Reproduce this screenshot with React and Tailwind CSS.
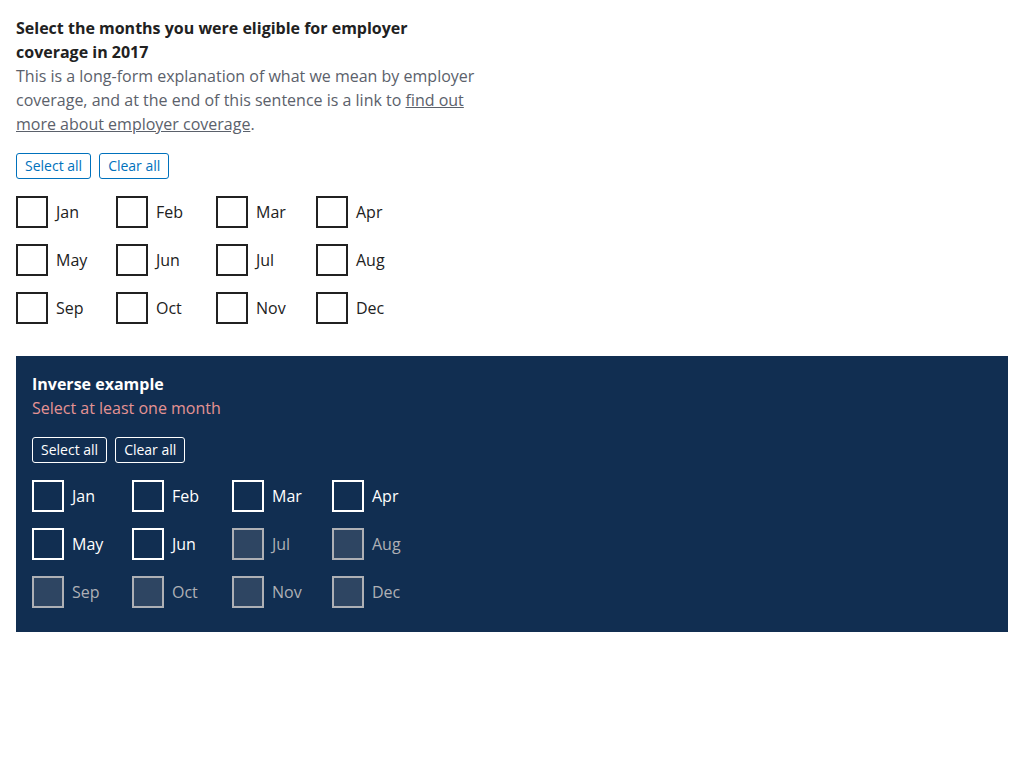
import { useState } from "react";

const MONTHS = ["Jan", "Feb", "Mar", "Apr", "May", "Jun", "Jul", "Aug", "Sep", "Oct", "Nov", "Dec"];

// months that are disabled in the inverse example
const DISABLED = ["Jul", "Aug", "Sep", "Oct", "Nov", "Dec"];

function MonthGrid({ inverse, checked, onToggle, disabled = [] }) {
  return (
    <div className="mt-[17px] grid grid-cols-[repeat(4,100px)] gap-y-4">
      {MONTHS.map((m) => {
        const off = disabled.includes(m);
        let box = "border-[#212121] bg-white";
        let text = "text-[#212121]";
        if (inverse) {
          box = off ? "border-[#aeb0b5] bg-[#2e4562]" : "border-white bg-[#112e51]";
          text = off ? "text-[#aeb0b5]" : "text-white";
        }
        return (
          <label key={m} className="flex h-8 items-center gap-2 cursor-pointer">
            <span
              className={`flex h-8 w-8 items-center justify-center border-2 ${box}`}
              onClick={() => !off && onToggle(m)}
            >
              {checked.includes(m) && (
                <svg viewBox="0 0 16 16" className={`h-5 w-5 ${inverse ? "text-white" : "text-[#212121]"}`}>
                  <path d="M2 8.5l4 4 8-9" fill="none" stroke="currentColor" strokeWidth="2" />
                </svg>
              )}
            </span>
            <span className={`text-base ${text}`}>{m}</span>
          </label>
        );
      })}
    </div>
  );
}

function Buttons({ inverse, onSelect, onClear }) {
  const cls = inverse
    ? "border-white text-white"
    : "border-[#0071bc] text-[#0071bc]";
  return (
    <div className="mt-[17px] flex gap-2">
      <button onClick={onSelect} className={`rounded-[3px] border px-2 py-[2px] text-sm leading-5 ${cls}`}>
        Select all
      </button>
      <button onClick={onClear} className={`rounded-[3px] border px-2 py-[2px] text-sm leading-5 ${cls}`}>
        Clear all
      </button>
    </div>
  );
}

export default function App() {
  const [picked, setPicked] = useState([]);
  const [pickedInv, setPickedInv] = useState([]);

  const toggle = (list, set) => (m) =>
    set(list.includes(m) ? list.filter((x) => x !== m) : [...list, m]);

  return (
    <main className="min-h-screen bg-white p-4 font-['Open_Sans',sans-serif] text-[#212121]">
      <fieldset>
        <legend className="max-w-[440px] text-base font-bold leading-6">
          Select the months you were eligible for employer coverage in 2017
        </legend>
        <p className="max-w-[480px] text-base leading-6 text-[#5b616b]">
          This is a long-form explanation of what we mean by employer coverage, and at the end of this
          sentence is a link to{" "}
          <a href="#" className="text-[#5b616b] underline">
            find out more about employer coverage
          </a>
          .
        </p>
        <Buttons
          onSelect={() => setPicked([...MONTHS])}
          onClear={() => setPicked([])}
        />
        <MonthGrid checked={picked} onToggle={toggle(picked, setPicked)} />
      </fieldset>

      <section className="mt-8 bg-[#112e51] px-4 pt-4 pb-6">
        <h2 className="text-base font-bold leading-6 text-white">Inverse example</h2>
        <p className="text-base leading-6 text-[#e59393]">Select at least one month</p>
        <Buttons
          inverse
          onSelect={() => setPickedInv(MONTHS.filter((m) => !DISABLED.includes(m)))}
          onClear={() => setPickedInv([])}
        />
        <MonthGrid
          inverse
          checked={pickedInv}
          disabled={DISABLED}
          onToggle={toggle(pickedInv, setPickedInv)}
        />
      </section>
    </main>
  );
}
